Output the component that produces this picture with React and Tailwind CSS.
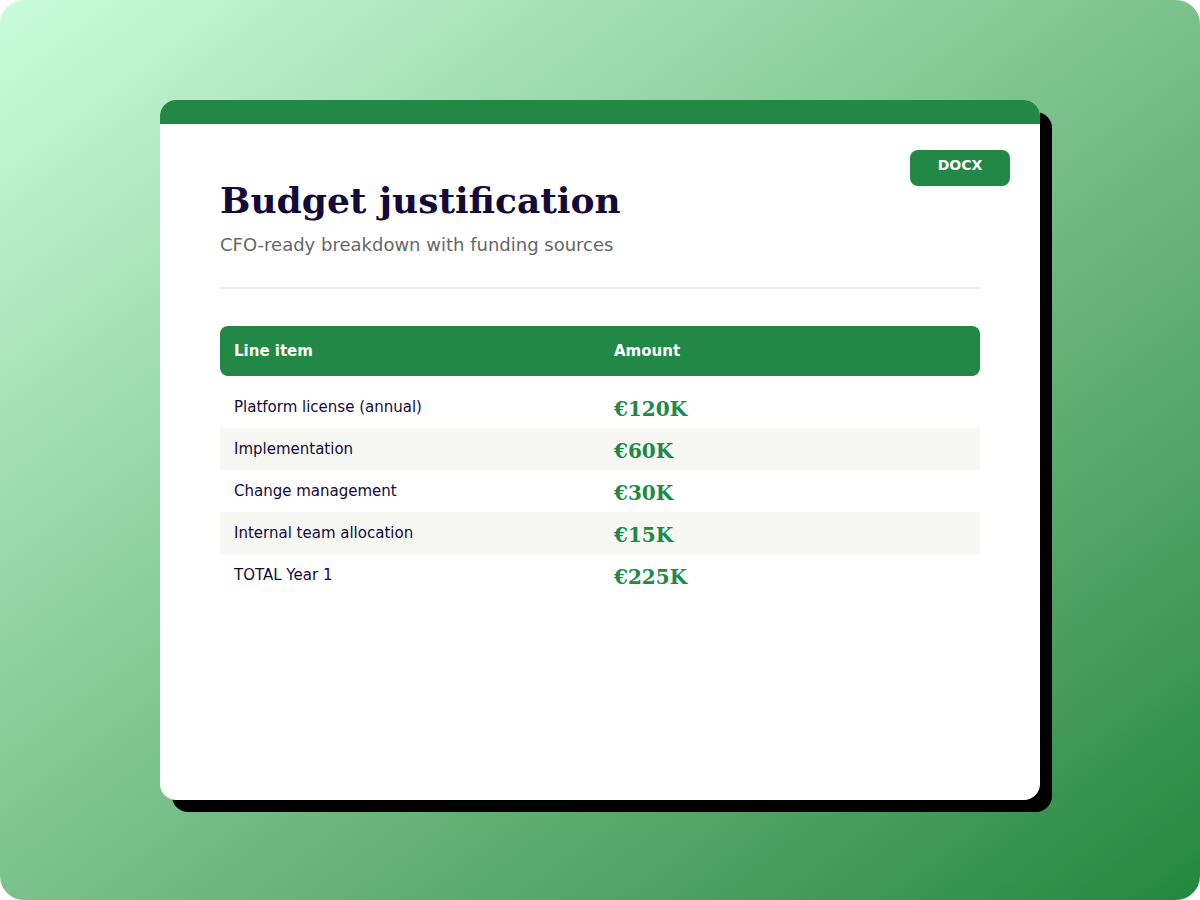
import React from "react";

const rows = [
  { item: "Platform license (annual)", amount: "€120K" },
  { item: "Implementation", amount: "€60K" },
  { item: "Change management", amount: "€30K" },
  { item: "Internal team allocation", amount: "€15K" },
  { item: "TOTAL Year 1", amount: "€225K" },
];

export default function App() {
  return (
    <div className="w-[1200px] h-[900px] bg-white">
      <div className="w-[1200px] h-[900px] rounded-[24px] bg-gradient-to-br from-[#cbfddc] to-[#21873f] pt-[100px] pl-[160px] font-['DejaVu_Sans',sans-serif]">
        <div className="w-[880px] h-[700px] bg-white rounded-[16px] overflow-hidden shadow-[12px_12px_0_#000]">
          {/* top bar */}
          <div className="h-[24px] bg-[#228846]" />

          <div className="relative px-[60px] pt-[54px]">
            <div className="absolute top-[26px] right-[30px] w-[100px] h-[36px] rounded-[8px] bg-[#228846] text-white text-[14px] font-bold text-center pt-[5px]">
              DOCX
            </div>

            <h1 className="font-['DejaVu_Serif',serif] font-bold text-[36px] leading-[44px] text-[#130a3a]">
              Budget justification
            </h1>
            <p className="mt-[11px] text-[18px] leading-[24px] text-[#666666]">
              CFO-ready breakdown with funding sources
            </p>

            <div className="mt-[30px] h-[2px] bg-[#eeeeee]" />

            {/* table */}
            <div className="mt-[37px]">
              <div className="flex h-[50px] items-center rounded-[8px] bg-[#228846] text-white text-[15px] font-bold">
                <div className="w-1/2 px-[14px]">Line item</div>
                <div className="w-1/2 px-[14px]">Amount</div>
              </div>
              <div className="mt-[10px]">
                {rows.map((r, i) => (
                  <div
                    key={r.item}
                    className={`flex h-[42px] items-center ${i % 2 === 1 ? "bg-[#f7f8f4]" : ""}`}
                  >
                    <div className="w-1/2 px-[14px] text-[15px] text-[#130a3a]">{r.item}</div>
                    <div className="w-1/2 px-[14px] pt-[4px] font-['DejaVu_Serif',serif] font-bold text-[20px] text-[#228846]">
                      {r.amount}
                    </div>
                  </div>
                ))}
              </div>
            </div>
          </div>
        </div>
      </div>
    </div>
  );
}
